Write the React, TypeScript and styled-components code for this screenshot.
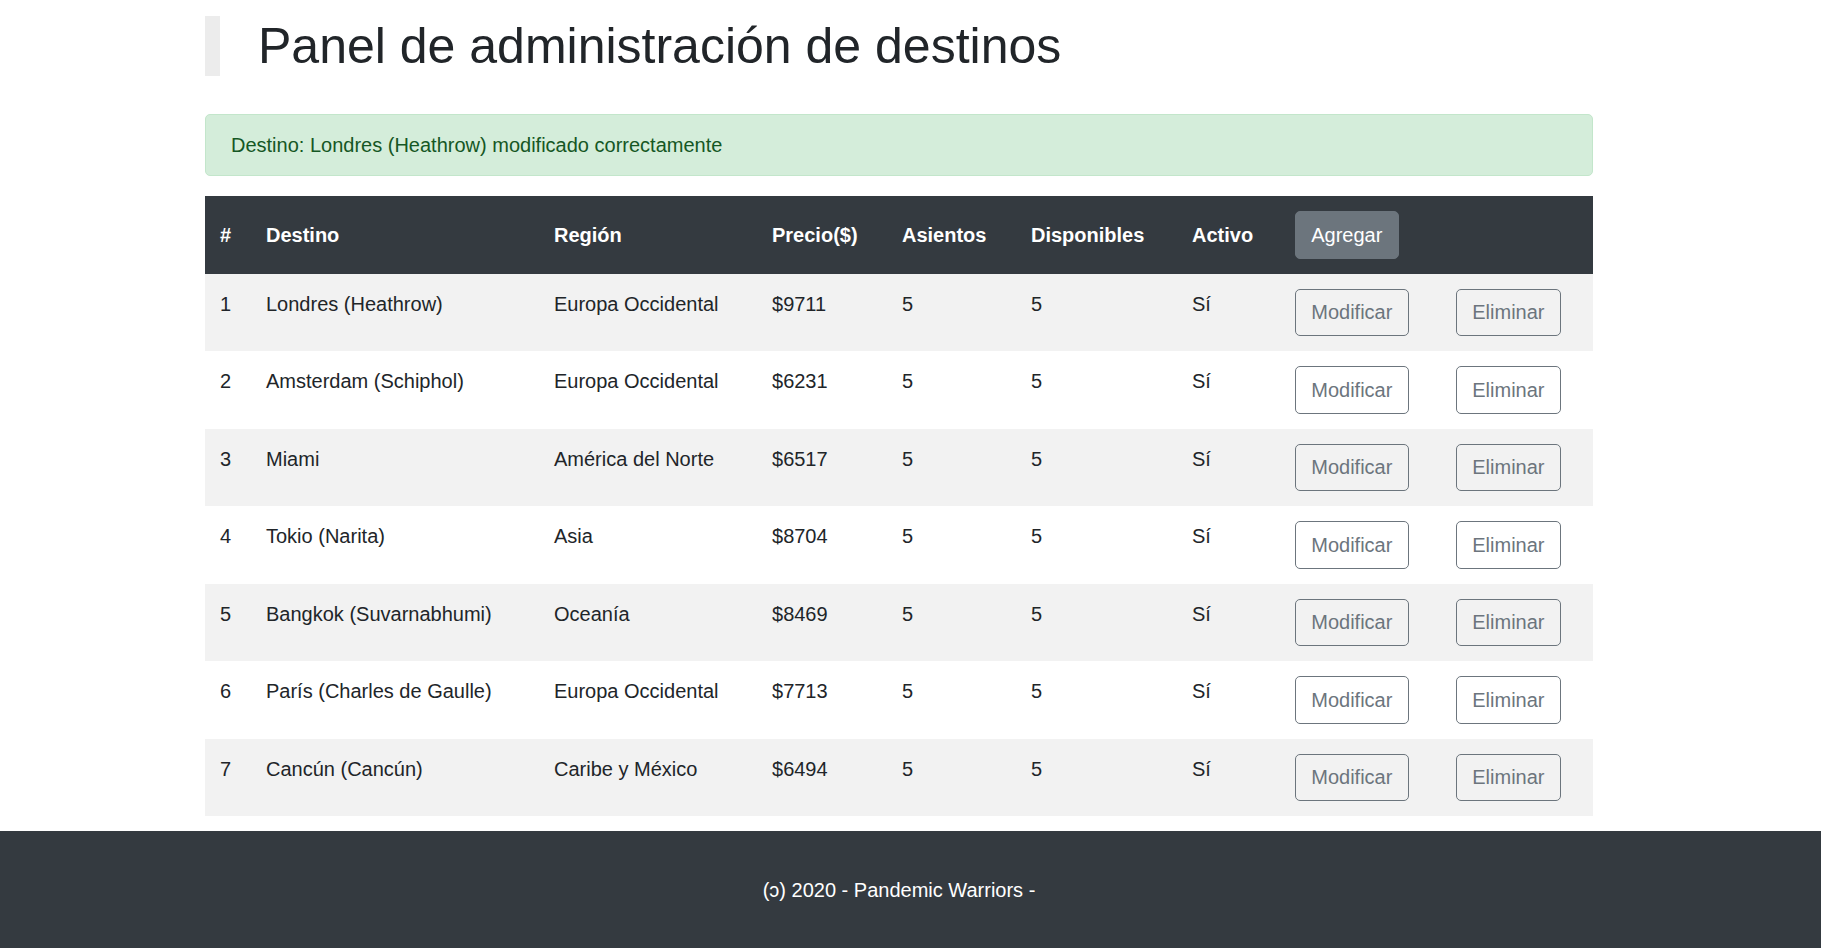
import styled, { createGlobalStyle } from "styled-components";

const GlobalStyle = createGlobalStyle`
  html, body {
    margin: 0;
    padding: 0;
    background: #fff;
  }
  html {
    overflow-y: scroll;
  }
  html::-webkit-scrollbar {
    width: 11px;
    background: #f1f1f1;
  }
  html::-webkit-scrollbar-thumb {
    background: #c1c1c1;
  }
  body {
    font-family: "Liberation Sans", Arial, sans-serif;
    font-size: 20px;
    line-height: 1.5;
    color: #212529;
  }
  * {
    box-sizing: border-box;
  }
`;

type Destino = {
  id: number;
  nombre: string;
  region: string;
  precio: number;
  asientos: number;
  disponibles: number;
};

const destinos: Destino[] = [
  { id: 1, nombre: "Londres (Heathrow)", region: "Europa Occidental", precio: 9711, asientos: 5, disponibles: 5 },
  { id: 2, nombre: "Amsterdam (Schiphol)", region: "Europa Occidental", precio: 6231, asientos: 5, disponibles: 5 },
  { id: 3, nombre: "Miami", region: "América del Norte", precio: 6517, asientos: 5, disponibles: 5 },
  { id: 4, nombre: "Tokio (Narita)", region: "Asia", precio: 8704, asientos: 5, disponibles: 5 },
  { id: 5, nombre: "Bangkok (Suvarnabhumi)", region: "Oceanía", precio: 8469, asientos: 5, disponibles: 5 },
  { id: 6, nombre: "París (Charles de Gaulle)", region: "Europa Occidental", precio: 7713, asientos: 5, disponibles: 5 },
  { id: 7, nombre: "Cancún (Cancún)", region: "Caribe y México", precio: 6494, asientos: 5, disponibles: 5 },
  { id: 8, nombre: "Madrid (Barajas)", region: "Europa Occidental", precio: 7120, asientos: 5, disponibles: 5 },
  { id: 9, nombre: "Roma (Fiumicino)", region: "Europa Occidental", precio: 6980, asientos: 5, disponibles: 5 },
];

const App = () => {
  return (
    <>
      <GlobalStyle />
      <Container>
        <Title>Panel de administración de destinos</Title>
        <Alert>Destino: Londres (Heathrow) modificado correctamente</Alert>
        <Table>
          <colgroup>
            <col style={{ width: 46 }} />
            <col style={{ width: 288 }} />
            <col style={{ width: 218 }} />
            <col style={{ width: 130 }} />
            <col style={{ width: 129 }} />
            <col style={{ width: 161 }} />
            <col style={{ width: 103 }} />
            <col style={{ width: 161 }} />
            <col style={{ width: 152 }} />
          </colgroup>
          <thead>
            <tr>
              <Th>#</Th>
              <Th>Destino</Th>
              <Th>Región</Th>
              <Th>Precio($)</Th>
              <Th>Asientos</Th>
              <Th>Disponibles</Th>
              <Th>Activo</Th>
              <Th>
                <Button $variant="solid">Agregar</Button>
              </Th>
              <Th />
            </tr>
          </thead>
          <tbody>
            {destinos.map((d) => (
              <Row key={d.id}>
                <Td>{d.id}</Td>
                <Td>{d.nombre}</Td>
                <Td>{d.region}</Td>
                <Td>${d.precio}</Td>
                <Td>{d.asientos}</Td>
                <Td>{d.disponibles}</Td>
                <Td>Sí</Td>
                <Td>
                  <Button $variant="outline">Modificar</Button>
                </Td>
                <Td>
                  <Button $variant="outline">Eliminar</Button>
                </Td>
              </Row>
            ))}
          </tbody>
        </Table>
      </Container>
      <Footer>
        <FooterInner>(ɔ) 2020 - Pandemic Warriors -</FooterInner>
      </Footer>
    </>
  );
};

export default App;

const Container = styled.div`
  width: 1388px;
  margin-left: 205px;
  padding-top: 16px;
  padding-bottom: 140px;
`;

const Title = styled.h1`
  margin: 0 0 38px 0;
  height: 60px;
  border-left: 15px solid #ececec;
  padding-left: 38px;
  font-size: 50px;
  font-weight: 400;
  line-height: 1.2;
  color: #212529;
`;

const Alert = styled.div`
  background-color: #d4edda;
  border: 1px solid #c3e6cb;
  color: #155724;
  border-radius: 5px;
  padding: 15px 25px;
  margin-bottom: 20px;
`;

const Table = styled.table`
  width: 100%;
  table-layout: fixed;
  border-collapse: collapse;
  color: #212529;
`;

const Th = styled.th`
  background-color: #343a40;
  color: #fff;
  font-weight: 700;
  text-align: left;
  vertical-align: middle;
  padding: 15px;
  white-space: nowrap;
`;

const Row = styled.tr`
  &:nth-child(odd) {
    background-color: #f2f2f2;
  }
`;

const Td = styled.td`
  padding: 15px;
  vertical-align: top;
  white-space: nowrap;
`;

const Button = styled.button<{ $variant: "solid" | "outline" }>`
  display: inline-block;
  font-family: inherit;
  font-size: 20px;
  line-height: 30px;
  font-weight: 400;
  padding: 7.75px 15.25px;
  border-radius: 5px;
  border: 1px solid #6c757d;
  cursor: pointer;
  background-color: ${(p) => (p.$variant === "solid" ? "#6c757d" : "transparent")};
  color: ${(p) => (p.$variant === "solid" ? "#fff" : "#6c757d")};
`;

const Footer = styled.footer`
  position: fixed;
  left: 0;
  right: 0;
  bottom: 0;
  height: 117px;
  background-color: #343a40;
  color: #fff;
  display: flex;
  align-items: center;
`;

const FooterInner = styled.div`
  width: 1388px;
  margin-left: 205px;
  text-align: center;
`;
